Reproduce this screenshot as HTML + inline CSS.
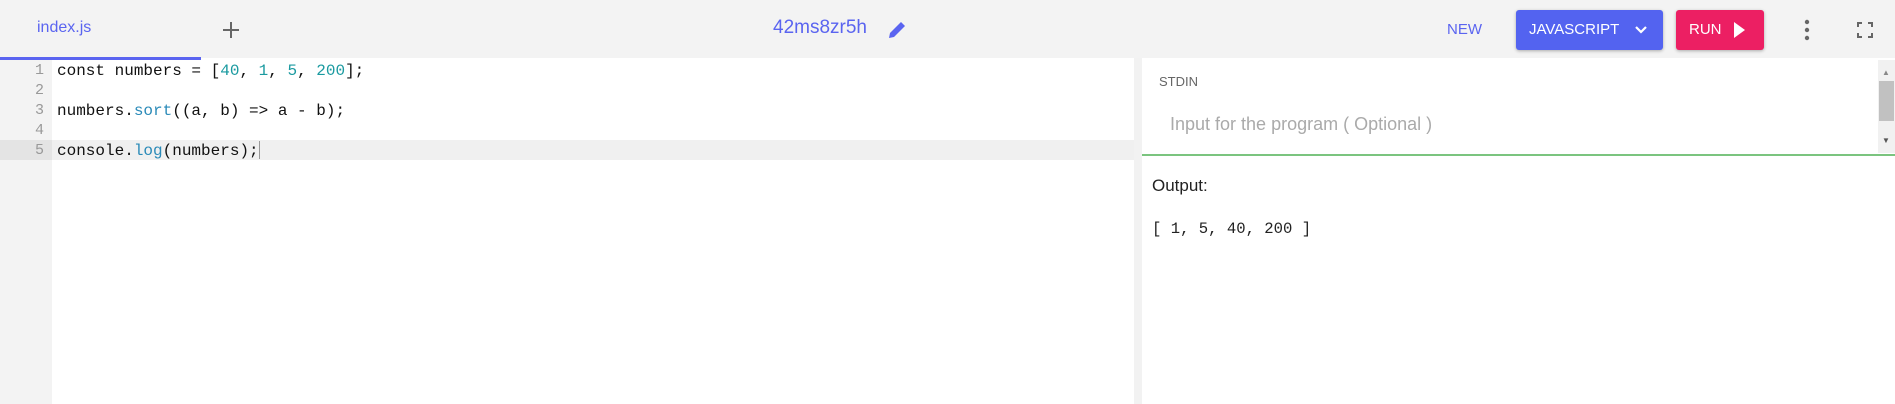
<!DOCTYPE html>
<html><head><meta charset="utf-8"><style>
*{margin:0;padding:0;box-sizing:border-box}
body{width:1895px;height:404px;background:#fff;font-family:"Liberation Sans",sans-serif;position:relative;overflow:hidden}
.abs{position:absolute}
.hdr{left:0;top:0;width:1895px;height:58px;background:#f3f3f3}
.mono{font-family:"Liberation Mono",monospace}
.code{left:57px;font-size:16px;color:#111;line-height:20px;white-space:pre}
.ln{width:44px;text-align:right;font-size:15px;color:#999;line-height:20px}
.n{color:#1a9aa0}.f{color:#2a8ab8}
</style></head><body>
<div class="abs hdr"></div>
<div class="abs" style="left:37px;top:19px;font-size:16px;color:#5a64f0">index.js</div>
<div class="abs" style="left:0;top:57px;width:201px;height:3px;background:#5a64f0"></div>
<svg class="abs" style="left:221px;top:20px" width="20" height="20"><path d="M10 2V18M2 10H18" stroke="#666" stroke-width="2"/></svg>
<div class="abs" style="left:773px;top:17px;font-size:19px;color:#5a64f0">42ms8zr5h</div>
<svg class="abs" style="left:886px;top:19px" width="22" height="22"><path d="M3 19l1-5L15 3l4 4L8 18z" fill="#5a64f0"/></svg>
<div class="abs" style="left:1447px;top:21px;font-size:15px;color:#5a64f0">NEW</div>
<div class="abs" style="left:1516px;top:10px;width:147px;height:40px;background:#5363f0;border-radius:3px;box-shadow:0 1px 3px rgba(0,0,0,.3);color:#fff;font-size:15px;padding:11px 0 0 13px">JAVASCRIPT</div>
<svg class="abs" style="left:1634px;top:24px" width="14" height="12"><path d="M2 3l5 5 5-5" stroke="#fff" stroke-width="2.2" fill="none"/></svg>
<div class="abs" style="left:1676px;top:10px;width:88px;height:40px;background:#ec1f63;border-radius:3px;box-shadow:0 1px 3px rgba(0,0,0,.3);color:#fff;font-size:15px;padding:11px 0 0 13px">RUN</div>
<svg class="abs" style="left:1733px;top:21px" width="14" height="18"><path d="M1 1L12 9 1 17z" fill="#fff"/></svg>
<svg class="abs" style="left:1802px;top:18px" width="10" height="24"><circle cx="5" cy="4" r="2.2" fill="#666"/><circle cx="5" cy="12" r="2.2" fill="#666"/><circle cx="5" cy="20" r="2.2" fill="#666"/></svg>
<svg class="abs" style="left:1857px;top:22px" width="16" height="16"><path d="M1 5V1h4M11 1h4v4M15 11v4h-4M5 15H1v-4" stroke="#666" stroke-width="2" fill="none"/></svg>
<div class="abs" style="left:0;top:60px;width:52px;height:344px;background:#f3f3f3"></div>
<div class="abs" style="left:0;top:140px;width:1134px;height:20px;background:#f0f0f0"></div>
<div class="abs" style="left:0;top:140px;width:52px;height:20px;background:#e4e4e4"></div>
<div class="abs" style="left:1134px;top:58px;width:8px;height:346px;background:#f2f2f2"></div>
<div class="abs mono" style="left:0;top:61px">
<div class="ln">1</div><div class="ln">2</div><div class="ln">3</div><div class="ln">4</div><div class="ln">5</div></div>
<div class="abs mono code" style="top:61px">const numbers = [<span class="n">40</span>, <span class="n">1</span>, <span class="n">5</span>, <span class="n">200</span>];

numbers.<span class="f">sort</span>((a, b) =&gt; a - b);

console.<span class="f">log</span>(numbers);</div>
<div class="abs" style="left:259px;top:141px;width:1px;height:18px;background:#999"></div>
<div class="abs" style="left:1159px;top:74px;font-size:13px;color:#666">STDIN</div>
<div class="abs" style="left:1170px;top:114px;font-size:18px;color:#aaa">Input for the program ( Optional )</div>
<div class="abs" style="left:1878px;top:60px;width:17px;height:93px;background:#f1f1f1"></div>
<div class="abs" style="left:1879px;top:81px;width:15px;height:40px;background:#c1c1c1"></div>
<div class="abs" style="left:1882px;top:68px;font-size:8px;color:#888">▲</div>
<div class="abs" style="left:1882px;top:136px;font-size:8px;color:#555">▼</div>
<div class="abs" style="left:1142px;top:154px;width:753px;height:2px;background:#7bc47f"></div>
<div class="abs" style="left:1152px;top:176px;font-size:17px;color:#222">Output:</div>
<div class="abs mono" style="left:1152px;top:220px;font-size:15.6px;color:#222;white-space:pre">[ 1, 5, 40, 200 ]</div>
</body></html>
